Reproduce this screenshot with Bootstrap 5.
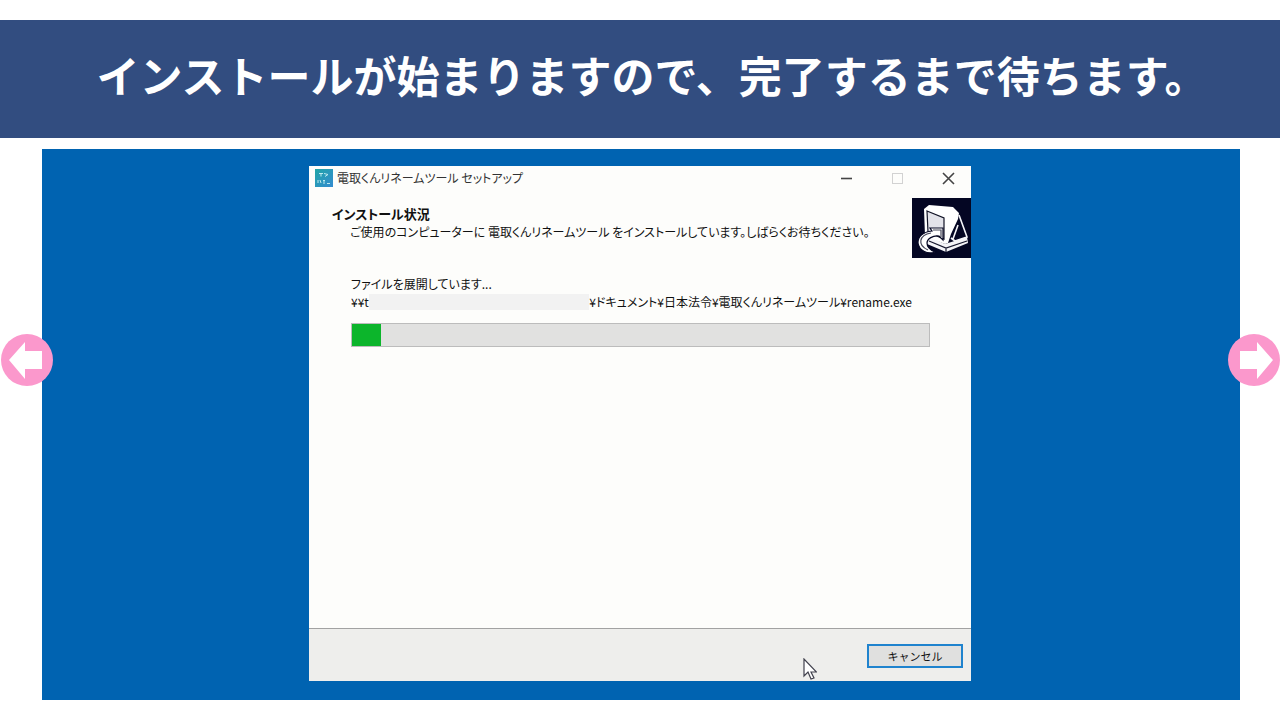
<!DOCTYPE html>
<html lang="ja">
<head>
<meta charset="utf-8">
<meta name="viewport" content="width=device-width, initial-scale=1">
<title>電取くんリネームツール セットアップ</title>
<link href="https://cdn.jsdelivr.net/npm/bootstrap@5.3.0/dist/css/bootstrap.min.css" rel="stylesheet">
<style>
body { font-family: "Noto Sans CJK JP", sans-serif; background: #fff; }
.slide-title { background: #324d80; margin-top: 20px; padding: 22px 0 32px 24px; }
.slide-title h1 { font-size: 43px; line-height: 64px; font-weight: 600; }
.stage { background: #0063b1; margin: 11px 40px 0 42px; padding: 17px 2px 19px 0; }
.setup { width: 662px; background: #fdfdfb; color: #111; font-size: 12px; line-height: 18px; font-feature-settings: "palt"; }
.titlebar { height: 24px; padding-left: 6px; color: #333; }
.win-btn { width: 51px; height: 24px; padding: 0; border: 0; background: none; display: flex; align-items: center; justify-content: center; }
.win-btn:last-child { width: 45px; margin-left: 3px; }
.intro { padding: 15px 0 0 23px; }
.intro h2 { font-size: 13px; line-height: 18px; font-weight: 700; }
.indent { padding-left: 18px; }
.work { min-height: 370px; padding: 17px 41px 0 42px; }
.redacted { height: 16px; background: #f2f2f2; }
.path-row { padding-right: 18px; }
.bar { height: 24px; margin-top: 12px; border: 1px solid #bcbcbc; border-radius: 0; background: #e1e1e0; }
.bar .progress-bar { background: #0cb52b; }
.setup-foot { background: #eeeeec; border-top: 1px solid #a2a2a2; padding: 15px 8px 13px; }
.cancel { width: 96px; height: 24px; padding: 0; border: 2px solid #1f83ce; border-radius: 0; background: #e0e0df; color: #111; font-size: 11px; line-height: 18px; }
.pointer { margin-right: 50px; margin-top: 14px; margin-bottom: -12px; }
.turn { top: 50%; width: 52px; height: 52px; margin-top: -26px; padding: 0; border: 0; background: none; }
.turn svg { display: block; }
.turn-prev { left: 1px; }
.turn-next { right: 0; }
</style>
</head>
<body>
<header class="slide-title text-center text-white">
  <h1 class="m-0">インストールが始まりますので、完了するまで待ちます。</h1>
</header>

<main class="stage">
  <section class="setup mx-auto" aria-label="セットアップ">
    <div class="titlebar d-flex align-items-center">
      <svg width="18" height="18" viewBox="0 0 18 18" aria-hidden="true">
        <defs><linearGradient id="tile" x2="1" y2="1"><stop offset="0" stop-color="#20a5a7"/><stop offset="1" stop-color="#348bd0"/></linearGradient></defs>
        <rect width="18" height="18" fill="url(#tile)"/>
        <path d="M4 4.500h4M6 4.500v3M9 4.500l4 1M10 7.500l3-2M3 11v3M5 11l1 3M8 11.500h2M9 12v3M12 14.500h3" fill="none" stroke="#bdeaf0" stroke-width="1"/>
      </svg>
      <span class="me-auto ps-1">電取くんリネームツール セットアップ</span>
      <button type="button" class="win-btn" aria-label="最小化"><svg width="13" height="13"><path d="M1 6.500h11" stroke="#444" stroke-width="1.600"/></svg></button>
      <button type="button" class="win-btn" aria-label="最大化"><svg width="13" height="13"><rect x="1.500" y="1.500" width="10" height="10" fill="none" stroke="#d2d2d2"/></svg></button>
      <button type="button" class="win-btn" aria-label="閉じる"><svg width="13" height="13"><path d="M1 1l11 11M12 1L1 12" stroke="#444" stroke-width="1.600"/></svg></button>
    </div>

    <div class="d-flex justify-content-between">
      <div class="intro">
        <h2 class="m-0">インストール状況</h2>
        <p class="indent m-0">ご使用のコンピューターに 電取くんリネームツール をインストールしています。しばらくお待ちください。</p>
      </div>
      <svg class="mt-2" width="59" height="60" viewBox="0 0 59 60" aria-hidden="true">
        <rect width="59" height="60" fill="#040623"/>
        <path d="M16 38l17 8 22-7 1 6-22 9-19-8z" fill="#f4f4f8"/>
        <path d="M17 43l17 7 21-7M34 50v4" fill="none" stroke="#17182f" stroke-width="1.200"/>
        <path d="M12 11l5-4 24 2 6 6-1 6-7 15-3 9-3 1-20-8z" fill="#fff"/>
        <path d="M15 13l17 7v21l-16-7z" fill="#e3e3ea" stroke="#111326" stroke-width="1.200"/>
        <path d="M47 17l8 22-12 4-4-3M46 27l-5 14" fill="none" stroke="#f4f4f8" stroke-width="1.600"/>
        <path d="M18 30h13v12l-4-4c-6-1-12 3-12 7 0 4 3 7 8 9-8 3-16-2-17-9 0-7 6-11 14-12z" fill="#fff" stroke="#040623" stroke-width="1.200"/>
        <path d="M19 35c-12 2-14 12-3 17M21 32h8v7" fill="none" stroke="#454759" stroke-width="1.200"/>
      </svg>
    </div>

    <div class="work">
      <div>ファイルを展開しています...</div>
      <div class="path-row d-flex align-items-center">
        <span>¥¥t</span><span class="redacted flex-grow-1"></span><span class="text-nowrap">¥ドキュメント¥日本法令¥電取くんリネームツール¥rename.exe</span>
      </div>
      <div class="progress bar" role="progressbar" aria-label="進行状況" aria-valuenow="5" aria-valuemin="0" aria-valuemax="100">
        <div class="progress-bar" style="width: 5%"></div>
      </div>
    </div>

    <div class="setup-foot d-flex justify-content-end align-items-start">
      <svg class="pointer" width="14" height="22" viewBox="0 0 14 22" aria-hidden="true"><path d="M1 1v17l4-4 3 7 3-1-3-6h5.500z" fill="#fff" stroke="#41414d" stroke-width="1.200"/></svg>
      <button type="button" class="cancel btn">キャンセル</button>
    </div>
  </section>
</main>

<button type="button" class="turn turn-prev position-absolute" aria-label="前へ">
  <svg width="52" height="52" viewBox="0 0 52 52"><circle cx="26" cy="26" r="26" fill="#fb98cc"/><path d="M8 26L24 8v9h17v18H24v10z" fill="#fff"/></svg>
</button>
<button type="button" class="turn turn-next position-absolute" aria-label="次へ">
  <svg width="52" height="52" viewBox="0 0 52 52"><circle cx="26" cy="26" r="26" fill="#fb98cc"/><path d="M45 26L29 8v9H12v18h17v10z" fill="#fff"/></svg>
</button>
<script src="https://cdn.jsdelivr.net/npm/bootstrap@5.3.0/dist/js/bootstrap.bundle.min.js"></script>
</body>
</html>
